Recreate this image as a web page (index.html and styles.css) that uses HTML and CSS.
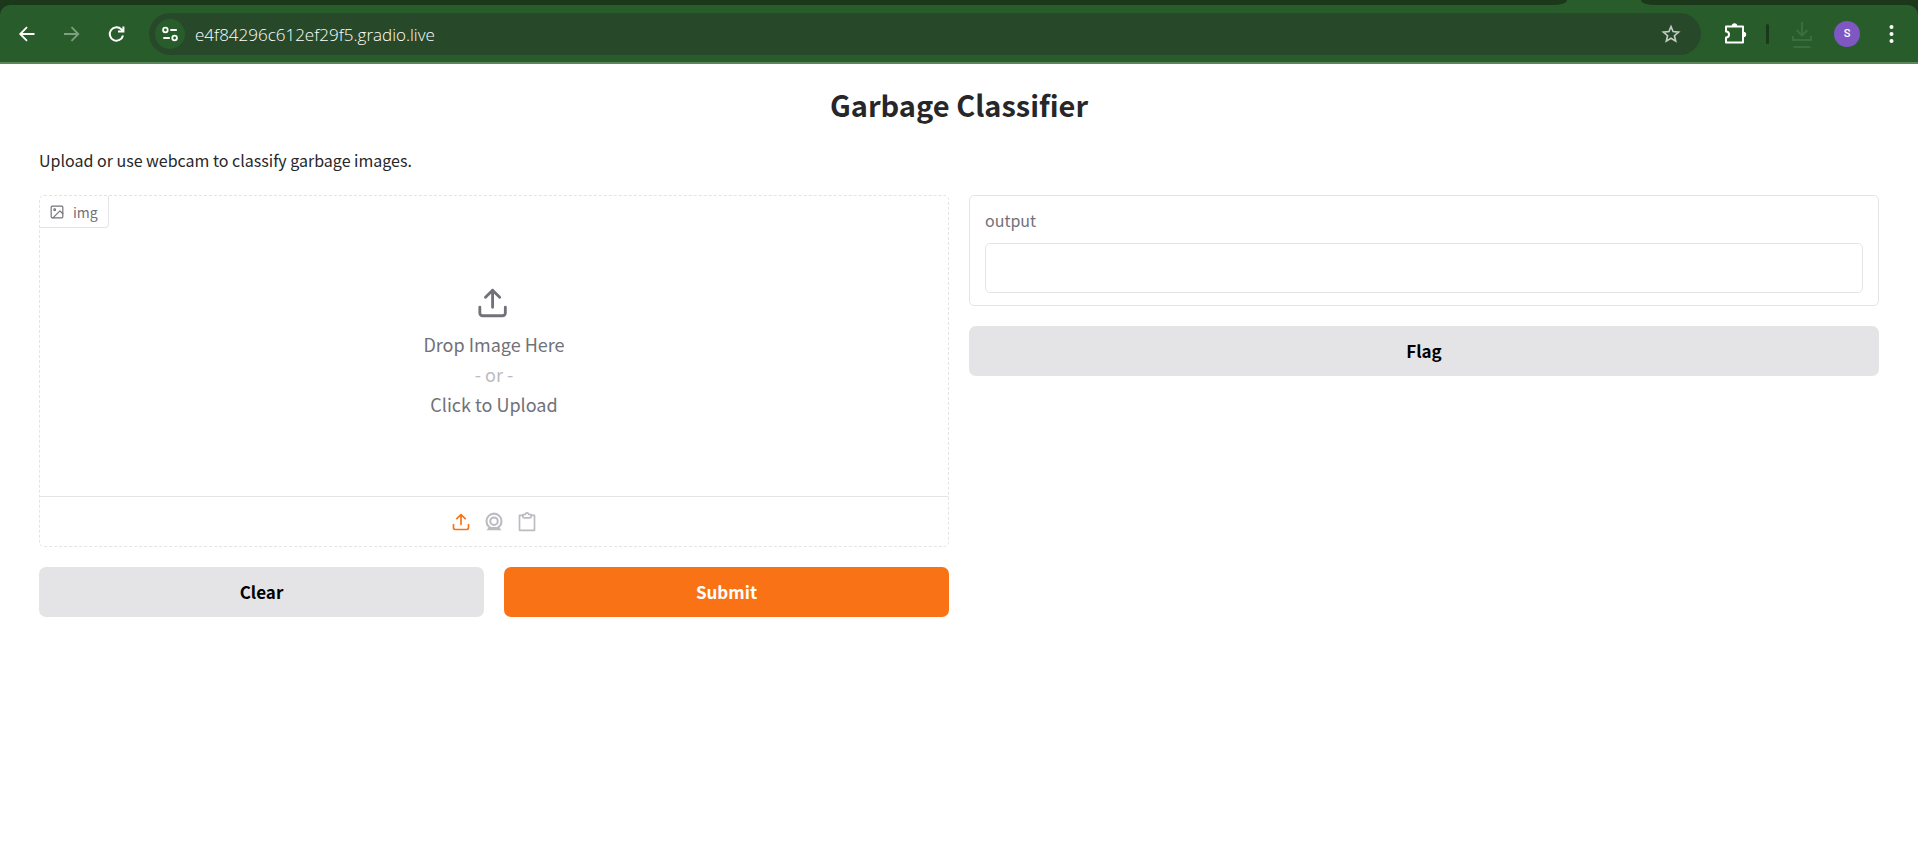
FILE: index.html
```html
<!DOCTYPE html>
<html lang="en">
<head>
<meta charset="utf-8">
<meta name="viewport" content="width=device-width, initial-scale=1">
<title>Garbage Classifier</title>
<link rel="stylesheet" href="styles.css">
</head>
<body>
<header class="browser">
  <div class="tabstrip"><span class="strip-left"></span><span class="strip-right"></span></div>
  <div class="toolbar">
    <nav class="nav" aria-label="Browser navigation">
      <button class="tool" type="button" aria-label="Back"><svg width="20" height="20" viewBox="0 0 20 20" fill="none" stroke="currentColor" stroke-width="1.8"><path d="M17.5 10H3.5M10 3.2L3.2 10l6.8 6.8"/></svg></button>
      <button class="tool dim" type="button" aria-label="Forward"><svg width="20" height="20" viewBox="0 0 20 20" fill="none" stroke="currentColor" stroke-width="1.8"><path d="M2 10h14M9.500 3.2l6.8 6.8-6.8 6.8"/></svg></button>
      <button class="tool" type="button" aria-label="Reload"><svg width="20" height="20" viewBox="0 0 20 20" fill="none" stroke="currentColor" stroke-width="2"><path d="M16 11.5A6.7 6.7 0 1 1 14.400 5.4l1.5 1.6M16.400 2.6v5h-5.4"/></svg></button>
    </nav>
    <div class="omnibox">
      <button class="site-info" type="button" aria-label="Site information"><svg width="18" height="18" viewBox="0 0 18 18" fill="none" stroke="currentColor" stroke-width="1.8"><circle cx="4.4" cy="5" r="2.3"/><path d="M9.3 5h6.5M2.3 13h6.5"/><circle cx="13.6" cy="13" r="2.3"/></svg></button>
      <input class="address" type="text" aria-label="Address" value="e4f84296c612ef29f5.gradio.live">
      <button class="star" type="button" aria-label="Bookmark"><svg width="20" height="20" viewBox="0 0 20 20" fill="none" stroke="currentColor" stroke-width="1.6"><path d="M10 2.6l2.1 5 5.5.5-4.2 3.6 1.3 5.4-4.7-2.9-4.7 2.9 1.3-5.4-4.2-3.6 5.5-.5z"/></svg></button>
    </div>
    <div class="actions">
      <button class="tool" type="button" aria-label="Extensions"><svg width="24" height="24" viewBox="0 0 24 24" fill="none" stroke="currentColor" stroke-width="2" stroke-linejoin="round"><path d="M3 4.500h17v16H3v-5a2.600 2.600 0 0 0 0-6z"/><path d="M8.800 4a2.700 2.700 0 0 1 5.400 0zM20.500 9.800a2.700 2.700 0 0 1 0 5.400z" fill="currentColor" stroke="none"/></svg></button>
      <span class="divider"></span>
      <button class="tool faint" type="button" aria-label="Downloads"><svg width="24" height="28" viewBox="0 0 24 28" fill="none" stroke="currentColor" stroke-width="2"><path d="M12 2v13M6.500 10l5.500 5.500 5.500-5.500M3 16v4h18v-4M3.500 27h17"/></svg></button>
      <button class="avatar" type="button" aria-label="Profile">S</button>
      <button class="tool" type="button" aria-label="Menu"><svg width="20" height="20" viewBox="0 0 20 20" fill="currentColor"><circle cx="9.500" cy="3" r="2"/><circle cx="9.500" cy="10" r="2"/><circle cx="9.500" cy="17" r="2"/></svg></button>
    </div>
  </div>
</header>
<main class="app">
  <h1 class="title">Garbage Classifier</h1>
  <p class="description">Upload or use webcam to classify garbage images.</p>
  <div class="columns">
    <section class="column">
      <div class="image-block">
        <div class="block-label"><svg width="14" height="14" viewBox="0 0 24 24" fill="none" stroke="currentColor" stroke-width="2" stroke-linecap="round" stroke-linejoin="round"><rect x="2" y="2" width="20" height="20" rx="2"/><circle cx="8" cy="8" r="1.500"/><path d="M22 15l-5-5L5 22"/></svg><span>img</span></div>
        <button class="dropzone" type="button">
          <svg width="34" height="34" viewBox="0 0 24 24" fill="none" stroke="currentColor" stroke-width="2" stroke-linecap="round" stroke-linejoin="round"><path d="M20 15v4a2 2 0 0 1-2 2H4a2 2 0 0 1-2-2v-4M16 8l-5-5-5 5M11 3v12"/></svg>
          <span class="drop-text"><span>Drop Image Here</span><span class="or">- or -</span><span>Click to Upload</span></span>
        </button>
        <div class="sources">
          <button class="source active" type="button" aria-label="Upload file"><svg width="20" height="20" viewBox="0 0 24 24" fill="none" stroke="currentColor" stroke-width="2" stroke-linecap="round" stroke-linejoin="round"><path d="M21 15v4a2 2 0 0 1-2 2H5a2 2 0 0 1-2-2v-4M17 8l-5-5-5 5M12 3v12"/></svg></button>
          <button class="source" type="button" aria-label="Webcam"><svg width="20" height="20" viewBox="0 0 24 24" fill="none" stroke="currentColor" stroke-width="2.500"><circle cx="12" cy="11" r="9"/><circle cx="12" cy="11" r="4.500"/><path d="M6 18h12l3 4H3z" fill="currentColor" stroke="none"/></svg></button>
          <button class="source" type="button" aria-label="Paste from clipboard"><svg width="20" height="20" viewBox="0 0 24 24" fill="none" stroke="currentColor" stroke-width="2" stroke-linejoin="round"><path d="M8 4H3v18h18V4h-5"/><path d="M7 3h3a2 2 0 0 1 4 0h3v2a2 2 0 0 1-2 2H9a2 2 0 0 1-2-2z"/></svg></button>
        </div>
      </div>
      <div class="button-row">
        <button class="btn" type="button">Clear</button>
        <button class="btn primary" type="button">Submit</button>
      </div>
    </section>
    <section class="column">
      <div class="output-block">
        <label class="output-label" for="output">output</label>
        <input class="output-field" id="output" type="text" readonly>
      </div>
      <button class="btn" type="button">Flag</button>
    </section>
  </div>
</main>
</body>
</html>
```
FILE: styles.css
```css
* {
  box-sizing: border-box;
}

body {
  margin: 0;
  background: #fff;
  color: #27272a;
  font-family: "Noto Sans CJK SC", "Noto Sans", sans-serif;
  font-size: 16px;
  line-height: 24px;
}

button,
input {
  margin: 0;
  padding: 0;
  border: 0;
  background: none;
  color: inherit;
  font: inherit;
}

svg {
  display: block;
  flex: none;
}

.browser {
  background: #1b381b;
  color: #fff;
}

.tabstrip {
  display: flex;
  justify-content: space-between;
  height: 5px;
  background: #285d2b;
}

.strip-left,
.strip-right {
  background: #1b381b;
}

.strip-left {
  flex: 1;
  margin-right: 74px;
  border-bottom-right-radius: 12px 5px;
}

.strip-right {
  width: 277px;
  border-bottom-left-radius: 12px 5px;
}

.toolbar {
  display: flex;
  align-items: center;
  height: 59px;
  padding: 0 12px 0 13px;
  border-bottom: 2px solid #5c855e;
  border-radius: 10px 10px 0 0;
  background: #285d2b;
}

.nav {
  display: flex;
  gap: 17px;
  margin-right: 18px;
}

.tool {
  display: grid;
  place-items: center;
  width: 28px;
  height: 28px;
}

.dim {
  color: #7f9f80;
}

.faint {
  color: #3a6f3c;
}

.omnibox {
  display: flex;
  flex: 1;
  align-items: center;
  height: 42px;
  padding: 0 20px 0 6px;
  border-radius: 21px;
  background: #27492a;
}

.site-info {
  display: grid;
  place-items: center;
  width: 30px;
  height: 30px;
  margin-right: 10px;
  border-radius: 50%;
  background: #285d2b;
}

.address {
  flex: 1;
  min-width: 0;
  padding-top: 2px;
  font-family: "Open Sans", "Noto Sans", sans-serif;
  font-size: 17px;
  font-weight: 300;
}

.star {
  color: #c4cdc5;
}

.actions {
  display: flex;
  align-items: center;
  margin-left: 20px;
}

.divider {
  width: 3px;
  height: 20px;
  margin: 0 19px 0 17px;
  border-radius: 2px;
  background: #1b381b;
}

.avatar {
  width: 26px;
  height: 26px;
  margin: 0 18px;
  border-radius: 50%;
  background: #7e57c2;
  font-family: Roboto, sans-serif;
  font-size: 11px;
  font-weight: 500;
}

.app {
  padding: 20px 39px;
}

.title {
  margin: 0 0 24px;
  font-size: 29px;
  font-weight: 600;
  line-height: 40px;
  text-align: center;
}

.description {
  margin: 0 0 23px;
}

.columns {
  display: grid;
  grid-template-columns: 1fr 1fr;
  align-items: start;
  gap: 20px;
}

.column {
  display: grid;
  gap: 20px;
}

.image-block {
  position: relative;
  border: 1px dashed #e4e4e7;
  border-radius: 5px;
}

.block-label {
  position: absolute;
  top: 0;
  left: 0;
  display: flex;
  align-items: center;
  gap: 9px;
  height: 32px;
  padding: 0 10px;
  border: solid #e4e4e7;
  border-width: 0 1px 1px 0;
  border-radius: 0 0 4px;
  color: #71717a;
  font-size: 14px;
}

.dropzone {
  display: flex;
  flex-direction: column;
  align-items: center;
  justify-content: center;
  gap: 9px;
  width: 100%;
  height: 300px;
  padding-top: 12px;
  color: #71717a;
  font-size: 18px;
  line-height: 30px;
}

.drop-text {
  display: grid;
}

.or {
  color: #bbbbc2;
}

.sources {
  display: flex;
  align-items: center;
  justify-content: center;
  gap: 13px;
  height: 50px;
  border-top: 1px solid #e4e4e7;
  color: #bbbbc2;
}

.active {
  color: #f97316;
}

.button-row {
  display: grid;
  grid-template-columns: 1fr 1fr;
  gap: 20px;
}

.btn {
  height: 50px;
  border-radius: 7px;
  background: #e4e4e7;
  color: #000;
  font-size: 17px;
  font-weight: 600;
}

.primary {
  background: #f97316;
  color: #fff;
}

.output-block {
  display: grid;
  gap: 11px;
  padding: 12px 15px;
  border: 1px solid #e4e4e7;
  border-radius: 5px;
}

.output-label {
  color: #71717a;
}

.output-field {
  width: 100%;
  height: 50px;
  padding: 0 12px;
  border: 1px solid #e4e4e7;
  border-radius: 5px;
}
```
